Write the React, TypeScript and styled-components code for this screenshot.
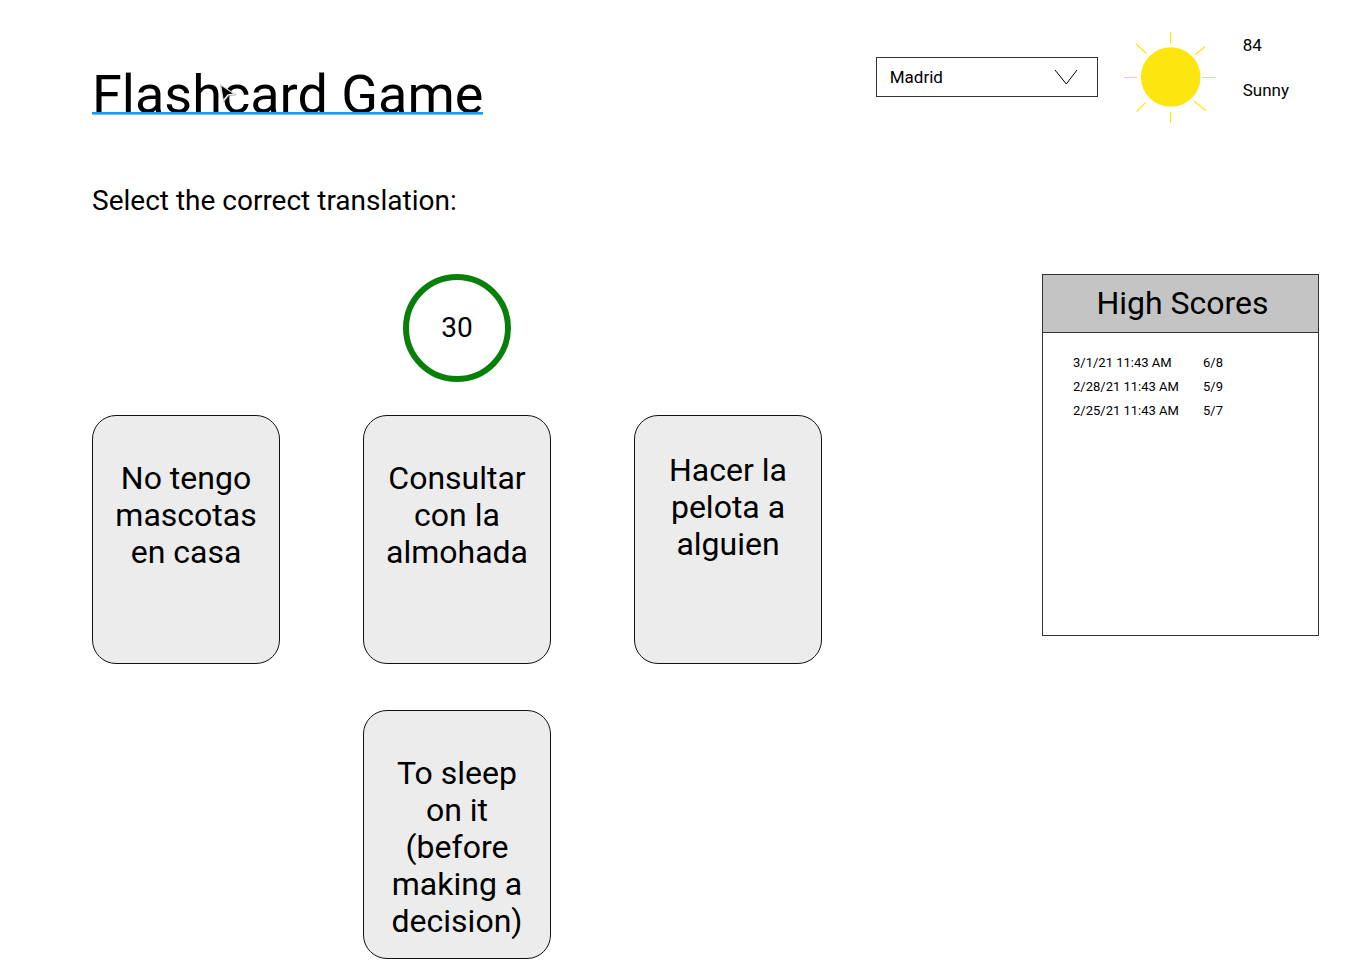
import React, { useState } from 'react';
import styled, { createGlobalStyle } from 'styled-components';

const GlobalStyle = createGlobalStyle`
  *, *::before, *::after { box-sizing: border-box; }
  body {
    margin: 0;
    background: #fff;
    color: #000;
    font-family: Roboto, "Liberation Sans", sans-serif;
  }
`;

const Page = styled.div`
  padding: 32px 52px 11px 92px;
`;

const Header = styled.header`
  display: flex;
  justify-content: space-between;
  align-items: flex-start;
`;

const Title = styled.h1`
  position: relative;
  margin: 32px 0 0;
  font-size: 54px;
  line-height: 62px;
  font-weight: 400;
`;

const TitleLink = styled.a`
  color: inherit;
  text-decoration: none;

  &::after {
    content: '';
    position: absolute;
    left: 0;
    right: 0;
    bottom: 11px;
    height: 3px;
    background: linear-gradient(#189bf5 2px, #6cbff9 2px);
  }
`;

const Pointer = styled.svg`
  position: absolute;
  left: 126px;
  top: 18px;
  width: 20px;
  height: 22px;
`;

const Weather = styled.section`
  display: flex;
  align-items: flex-start;
  padding-right: 30px;
`;

const CityPicker = styled.div`
  position: relative;
  width: 222px;
  margin: 25px 26px 0 0;
`;

const CitySelect = styled.select`
  appearance: none;
  display: block;
  width: 100%;
  height: 40px;
  padding: 0 13px;
  border: 1px solid #333;
  border-radius: 0;
  background: #fff;
  color: #000;
  font: 400 17px/20px Roboto, "Liberation Sans", sans-serif;
`;

const Chevron = styled.svg`
  position: absolute;
  right: 20px;
  top: 11px;
  width: 24px;
  height: 18px;
  pointer-events: none;
`;

const Sun = styled.svg`
  width: 92px;
  height: 92px;
`;

const Conditions = styled.div`
  display: flex;
  flex-direction: column;
  gap: 25px;
  margin: 3px 0 0 27px;
  font-size: 17px;
  line-height: 20px;
`;

const Content = styled.div`
  display: flex;
  justify-content: space-between;
  align-items: flex-start;
`;

const Instruction = styled.h2`
  margin: 58px 0 57px;
  font-size: 28px;
  line-height: 33px;
  font-weight: 400;
`;

const Board = styled.main`
  display: grid;
  grid-template-columns: repeat(3, 188px);
  column-gap: 83px;
`;

const Timer = styled.div`
  grid-column: 1 / -1;
  justify-self: center;
  display: grid;
  place-items: center;
  width: 108px;
  height: 108px;
  margin-bottom: 33px;
  padding-bottom: 2px;
  border: 6px solid #078009;
  border-radius: 50%;
  font-size: 28px;
  line-height: 33px;
`;

const Card = styled.button<{ $raised?: boolean }>`
  display: flex;
  justify-content: center;
  align-items: flex-start;
  width: 188px;
  height: 249px;
  padding: ${(p) => (p.$raised ? 36 : 44)}px 20px 0;
  border: 1px solid #111;
  border-radius: 24px;
  background: #ececec;
  color: #000;
  font: 400 32px/37px Roboto, "Liberation Sans", sans-serif;
  text-align: center;
`;

const Prompt = styled(Card).attrs({ as: 'div' })`
  grid-column: 2;
  margin-top: 46px;
`;

const Scores = styled.aside`
  width: 277px;
  min-height: 362px;
  border: 1px solid #333;
`;

const ScoresTitle = styled.h2`
  margin: 0;
  padding: 9px 0 10px 4px;
  border-bottom: 1px solid #333;
  background: #c4c4c4;
  font-size: 32px;
  line-height: 38px;
  font-weight: 400;
  text-align: center;
`;

const ScoreTable = styled.table`
  margin: 18px 0 0 30px;
  border-collapse: collapse;
  font-size: 13px;
  line-height: 24px;
`;

const Played = styled.td`
  width: 130px;
  padding: 0;
`;

const Result = styled.td`
  padding: 0;
`;

const answers = [
  { text: 'No tengo mascotas en casa' },
  { text: 'Consultar con la almohada' },
  { text: 'Hacer la pelota a alguien', raised: true },
];

const scores = [
  { played: '3/1/21 11:43 AM', result: '6/8' },
  { played: '2/28/21 11:43 AM', result: '5/9' },
  { played: '2/25/21 11:43 AM', result: '5/7' },
];

export default function App() {
  const [city, setCity] = useState('Madrid');
  return (
    <>
      <GlobalStyle />
      <Page>
        <Header>
          <Title>
            <TitleLink href="#game">Flashcard Game</TitleLink>
            <Pointer viewBox="0 0 20 22" aria-hidden="true">
              <path d="M2.8 3.2 19 13 11 14.4 6.5 20.5Z" fill="#888" opacity=".45" />
              <path d="M2 2.3 18 12.3 10.6 13.6 5.6 19.6Z" fill="#fff" stroke="#999" strokeWidth=".4" />
              <path d="M3.4 4 14.8 11.5 9.5 12.5 5.6 17.2Z" fill="#000" />
            </Pointer>
          </Title>
          <Weather aria-label="Weather">
            <CityPicker>
              <CitySelect aria-label="City" value={city} onChange={(e) => setCity(e.target.value)}>
                <option>Madrid</option>
              </CitySelect>
              <Chevron viewBox="0 0 24 18" fill="none" stroke="#000" aria-hidden="true">
                <path d="M1 2 12.3 16 23 2" />
              </Chevron>
            </CityPicker>
            <Sun viewBox="0 0 92 92" aria-hidden="true">
              <circle cx="46.7" cy="45" r="29.8" fill="#fde60f" />
              <path
                d="M46.5 0V11.5M81 14.8 71.3 22.5M78.3 45.5H91.7M70 69 81.8 78.8M46.5 79.7V90.7M22 70.2 12.7 79.5M0 45.5H13M12 12 22.5 21.5"
                stroke="#fde60f"
                strokeWidth="1.2"
                fill="none"
              />
            </Sun>
            <Conditions>
              <span>84</span>
              <span>Sunny</span>
            </Conditions>
          </Weather>
        </Header>
        <Instruction>Select the correct translation:</Instruction>
        <Content>
          <Board id="game">
            <Timer role="timer">30</Timer>
            {answers.map((answer) => (
              <Card key={answer.text} type="button" $raised={answer.raised}>
                {answer.text}
              </Card>
            ))}
            <Prompt>To sleep on it (before making a decision)</Prompt>
          </Board>
          <Scores>
            <ScoresTitle>High Scores</ScoresTitle>
            <ScoreTable>
              <tbody>
                {scores.map((score) => (
                  <tr key={score.played}>
                    <Played>{score.played}</Played>
                    <Result>{score.result}</Result>
                  </tr>
                ))}
              </tbody>
            </ScoreTable>
          </Scores>
        </Content>
      </Page>
    </>
  );
}
